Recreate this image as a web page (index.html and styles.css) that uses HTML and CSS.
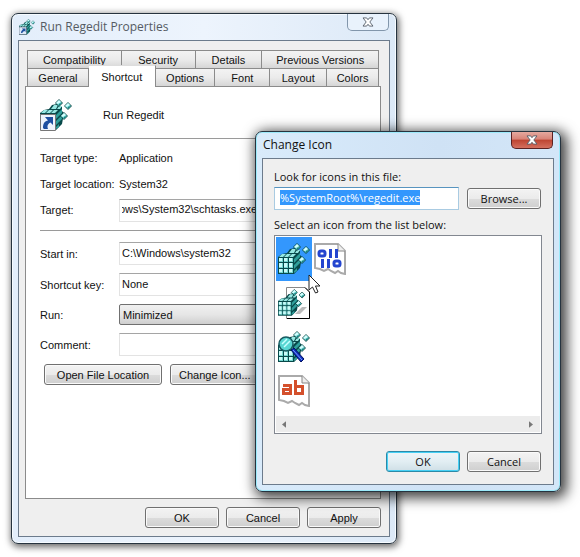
FILE: index.html
```html
<!DOCTYPE html>
<html lang="en">
<head>
    <meta charset="UTF-8">
    <meta name="viewport" content="width=device-width, initial-scale=1.0">
    <title>Run Regedit Properties</title>
    <link rel="stylesheet" href="styles.css">
</head>
<body>

    <!-- Shared icon shapes -->
    <svg class="defs" aria-hidden="true">
        <defs>
            <g id="gem" stroke="#00302f" stroke-width="0.8">
                <path d="M-3.500 0L0 -3.500L3.500 0L0 3.500Z" fill="#5cc9c4"/>
                <path d="M-3 0L0 -3L2 -1L-1 1Z" fill="#d4ffff" stroke="none"/>
                <path d="M0 3L0 1L3 0Z" fill="#1c7f7f" stroke="none"/>
            </g>
            <g id="block">
                <path d="M0 14L4 11L9 10L12 6L17 5L22 8V12L24 14L22 25L16 31L0 31Z" fill="#08494a"/>
                <path d="M1 15h4v4h-4zM6 15h4v4h-4zM11 15h4v4h-4zM1 20h4v5h-4zM6 20h4v5h-4zM11 20h4v5h-4zM1 26h4v4h-4zM6 26h4v4h-4zM11 26h4v4h-4z" fill="#74d6d0"/>
                <path d="M1 15h3v3h-3zM6 15h3v3h-3zM11 15h3v3h-3zM1 20h3v4h-3zM6 20h3v4h-3zM11 20h3v4h-3zM1 26h3v3h-3zM6 26h3v3h-3zM11 26h3v3h-3z" fill="#c9fbf8"/>
                <path d="M1 14l3-3h4l-3 3zM6 14l3-3h4l-3 3zM11 14l3-3h4l-3 3zM11 10l3-4h4l-2 4zM17 10l2-3h3l-2 3z" fill="#97e8e2"/>
                <path d="M16 16l3-3v4l-3 3zM19 13l3-3v4l-3 3zM16 22l3-3v4l-3 3zM19 19l3-3v4l-3 3zM16 28l3-3v3l-3 2z" fill="#2f9f9b"/>
            </g>
            <g id="regedit">
                <use href="#block"/>
                <use href="#gem" x="24" y="17"/>
                <use href="#gem" x="19" y="4"/>
                <use href="#gem" x="28" y="7"/>
            </g>
            <g id="sheet">
                <path d="M1 1H24L31 8V31L27 30L24 28L21 30L17 28L14 26L10 28L6 26L1 25Z" fill="#fff" stroke="#aaa" stroke-width="2"/>
                <path d="M24 1V8H31" fill="#eee" stroke="#888" stroke-width="1"/>
            </g>
            <g id="cross">
                <path d="M1 1H5L6.500 3L8 1H12L8.500 5.500L12 10H8L6.500 8L5 10H1L4.500 5.500Z"/>
            </g>
        </defs>
    </svg>

    <main class="desktop">

        <!-- Properties window -->
        <section class="window properties" aria-label="Run Regedit Properties">
            <header class="title-bar">
                <svg class="title-icon" viewBox="0 0 32 32" aria-hidden="true">
                    <use href="#regedit"/>
                    <path d="M0 16H15V31H0Z" fill="#dfe9f7" stroke="#345"/>
                    <path d="M4 28C4 23 7 22 8 22L6 19H13V26L11 24C8 25 7 26 7 28Z" fill="#1d4fa0"/>
                </svg>
                <h1>Run Regedit Properties</h1>
                <button class="close" type="button" aria-label="Close">
                    <svg viewBox="0 0 13 11" aria-hidden="true"><use href="#cross"/></svg>
                </button>
            </header>
            <div class="client">
                <div class="tabs tabs-back">
                    <button type="button">Compatibility</button>
                    <button type="button">Security</button>
                    <button type="button">Details</button>
                    <button type="button">Previous Versions</button>
                </div>
                <div class="tabs tabs-front">
                    <button type="button">General</button>
                    <button type="button" class="active">Shortcut</button>
                    <button type="button">Options</button>
                    <button type="button">Font</button>
                    <button type="button">Layout</button>
                    <button type="button">Colors</button>
                </div>
                <div class="panel">
                    <div class="shortcut-name">
                        <svg viewBox="0 0 32 32" aria-hidden="true">
                            <use href="#regedit"/>
                            <path d="M0.500 15.500H15.500V31.500H0.500Z" fill="#eef4fc" stroke="#777"/>
                            <path d="M3 29C3 24 5 22 8 21.500L5 18H13V26L10.500 23.500C7.500 25 7 27 8 30H4Z" fill="#1d4fa0"/>
                        </svg>
                        <span>Run Regedit</span>
                    </div>
                    <hr>
                    <dl class="field info">
                        <dt>Target type:</dt>
                        <dd>Application</dd>
                    </dl>
                    <dl class="field info">
                        <dt>Target location:</dt>
                        <dd>System32</dd>
                    </dl>
                    <div class="field info">
                        <label for="target">Target:</label>
                        <input class="scrolled" id="target" type="text" value="ows\System32\schtasks.exe">
                    </div>
                    <hr>
                    <div class="fields">
                        <div class="field">
                            <label for="start-in">Start in:</label>
                            <input id="start-in" type="text" value="C:\Windows\system32">
                        </div>
                        <div class="field">
                            <label for="shortcut-key">Shortcut key:</label>
                            <input id="shortcut-key" type="text" value="None">
                        </div>
                        <div class="field">
                            <label for="run">Run:</label>
                            <select id="run">
                                <option>Minimized</option>
                            </select>
                        </div>
                        <div class="field">
                            <label for="comment">Comment:</label>
                            <input id="comment" type="text">
                        </div>
                    </div>
                    <div class="panel-buttons">
                        <button class="btn wide" type="button">Open File Location</button>
                        <button class="btn" type="button">Change Icon...</button>
                    </div>
                </div>
                <footer class="actions">
                    <button class="btn" type="button">OK</button>
                    <button class="btn" type="button">Cancel</button>
                    <button class="btn" type="button">Apply</button>
                </footer>
            </div>
        </section>

        <!-- Change Icon dialog -->
        <section class="window change-icon" aria-label="Change Icon">
            <header class="title-bar">
                <h2>Change Icon</h2>
                <button class="close" type="button" aria-label="Close">
                    <svg viewBox="0 0 13 11" aria-hidden="true"><use href="#cross"/></svg>
                </button>
            </header>
            <div class="client">
                <label for="icon-file">Look for icons in this file:</label>
                <div class="browse">
                    <input id="icon-file" type="text" value="%SystemRoot%\regedit.exe" spellcheck="false">
                    <button class="btn" type="button">Browse...</button>
                </div>
                <p>Select an icon from the list below:</p>
                <div class="icon-list">
                    <ul>
                        <li class="selected">
                            <svg viewBox="0 0 32 32"><use href="#regedit"/></svg>
                        </li>
                        <li>
                            <svg viewBox="0 0 32 32">
                                <path d="M8.500 0.500H27L31.500 5V31.500H8.500Z" fill="#fff" stroke="#888"/>
                                <path d="M27 0.500L31.500 5V31.500H9" fill="none" stroke="#000"/>
                                <path d="M17 27L24 20L29 20L22 27Z" fill="#bbb"/>
                                <g transform="translate(0 2) scale(0.86)"><use href="#regedit"/></g>
                            </svg>
                        </li>
                        <li>
                            <svg viewBox="0 0 32 32">
                                <use href="#regedit"/>
                                <circle cx="8" cy="13" r="7" fill="#58d6d2" stroke="#175a60" stroke-width="1.500"/>
                                <path d="M4 13L9 8M6 16L12 10" stroke="#c8ffff" stroke-width="1.500"/>
                                <path d="M13 19L16 17L26 28L23 31Z" fill="#1030c0" stroke="#001060"/>
                                <path d="M15 19L24 29" stroke="#7aa0ff"/>
                            </svg>
                        </li>
                        <li>
                            <svg viewBox="0 0 32 32">
                                <use href="#sheet"/>
                                <g fill="none" stroke="#d4502c" stroke-width="3">
                                    <path d="M5 10.500H12.500V20M12.500 14.500H5.500V18.500H12.500"/>
                                    <path d="M17.500 5V18.500H24.500V11.500H17.500"/>
                                </g>
                            </svg>
                        </li>
                        <li>
                            <svg viewBox="0 0 32 32">
                                <use href="#sheet"/>
                                <g fill="none" stroke="#2445cf" stroke-width="3">
                                    <rect x="5" y="8" width="6" height="5" rx="2"/>
                                    <path d="M16.500 6V15M22.500 6V15"/>
                                    <path d="M8.500 16V25M14.500 16V25"/>
                                    <rect x="20" y="18" width="6" height="5" rx="2"/>
                                </g>
                            </svg>
                        </li>
                    </ul>
                    <div class="scroll-bar">
                        <button type="button" aria-label="Scroll left"><svg viewBox="0 0 5 8"><path d="M5 0V8L0 4Z"/></svg></button>
                        <button type="button" aria-label="Scroll right"><svg viewBox="0 0 5 8"><path d="M0 0V8L5 4Z"/></svg></button>
                    </div>
                </div>
                <footer class="actions">
                    <button class="btn default" type="button">OK</button>
                    <button class="btn" type="button">Cancel</button>
                </footer>
            </div>
        </section>

        <svg class="cursor" viewBox="0 0 13 20" aria-hidden="true">
            <path d="M1 1V16L4.500 13L7.500 19L10 18L7.500 12H12Z" fill="#fff" stroke="#222"/>
        </svg>
    </main>

    <script>
        // The file name is preselected when the dialog opens
        const iconFile = document.getElementById("icon-file");
        iconFile.focus();
        iconFile.select();
    </script>

</body>
</html>
```
FILE: styles.css
```css
/* Reset default styles */
* {
    box-sizing: border-box;
}

body, h1, h2, p, ul, dl, dd {
    margin: 0;
    padding: 0;
}

body {
    background: #fff;
    color: #111;
    font-family: "Liberation Sans", Arial, sans-serif;
    font-size: 11px;
    line-height: 14px;
}

button, input, select {
    font: inherit;
    color: inherit;
}

svg {
    display: block;
}

.defs {
    position: absolute;
    width: 0;
    height: 0;
}

.desktop {
    position: relative;
    min-height: 100vh;
}

/* Windows */
.window {
    position: absolute;
    padding: 0 6px 6px;
    border: 1px solid #26333f;
    border-radius: 7px;
}

.properties {
    left: 11px;
    top: 13px;
    width: 386px;
    background: linear-gradient(90deg, #e3eefb, #edf4fd 50%, #dce9f7);
    box-shadow: inset 0 0 0 1px #f6fbff, 1px 2px 7px 1px rgba(0, 0, 0, 0.6);
}

.change-icon {
    left: 255px;
    top: 131px;
    width: 306px;
    background: linear-gradient(90deg, #d9ebfb, #cfe2f5 60%, #d3e6f8);
    box-shadow: inset 0 0 0 1px #9ceafa, 3px 3px 13px 3px rgba(0, 0, 0, 0.75);
    font-family: "Open Sans", "Noto Sans", sans-serif;
}

.title-bar {
    display: flex;
    align-items: center;
    height: 26px;
    padding: 0 1px;
}

.title-bar h1, .title-bar h2 {
    flex: 1;
    font-family: "Open Sans", "Noto Sans", sans-serif;
    font-size: 12px;
    font-weight: 400;
}

.title-bar h1 {
    color: #555b63;
}

.title-icon {
    width: 16px;
    height: 16px;
    margin-right: 5px;
}

.close {
    display: flex;
    align-items: center;
    justify-content: center;
    align-self: flex-start;
    width: 42px;
    height: 17px;
    padding: 0;
    border: 1px solid #8296ab;
    border-top: 0;
    border-radius: 0 0 5px 5px;
    background: #e9f2fc;
}

.close svg {
    width: 12px;
    height: 10px;
    overflow: visible;
    fill: #fff;
    stroke: #565e69;
}

.change-icon .close {
    border-color: #5b2222;
    background: linear-gradient(#e5a99f, #d88377 45%, #bd4431 50%, #d4705f);
}

.client {
    border: 1px solid #6c7b8c;
    background: #efefef;
}

.properties .client {
    padding: 9px 8px 8px 6px;
}

.change-icon .client {
    padding: 11px 11px 12px;
}

/* Tabs */
.tabs {
    display: grid;
    margin: 0 2px;
    border-left: 1px solid #8b8b8b;
}

.tabs-back {
    grid-template-columns: 94fr 74fr 67fr 117fr;
}

.tabs-front {
    grid-template-columns: 61fr 67fr 60fr 55fr 57fr 52fr;
}

.tabs button {
    height: 18px;
    padding: 0;
    border: 1px solid #8b8b8b;
    border-width: 1px 1px 0 0;
    background: linear-gradient(#f3f3f3, #ebebeb 50%, #d6d6d6);
}

.tabs .active {
    position: relative;
    height: 22px;
    margin: -3px 0 -1px;
    border-top-color: #ddd;
    background: #fff;
}

.panel {
    min-height: 413px;
    padding: 12px 9px 0 14px;
    border: 1px solid #8b8b8b;
    background: #fff;
}

.panel hr {
    height: 1px;
    margin: 7px 0 6px;
    border: 0;
    background: #9a9a9a;
}

.shortcut-name {
    display: flex;
    align-items: center;
    gap: 31px;
}

.shortcut-name svg {
    width: 32px;
    height: 32px;
}

.field {
    display: grid;
    grid-template-columns: 79px 1fr;
    align-items: center;
}

.info {
    min-height: 26px;
}

.field input {
    width: 100%;
    height: 23px;
    padding: 0 2px 2px;
    border: 1px solid #e3e3e3;
    border-top-color: #a5a5a5;
    background: #fff;
    outline: none;
}

.field .scrolled {
    text-indent: -3px;
}

.field select {
    width: 100%;
    height: 21px;
    padding: 0 3px;
    appearance: none;
    border: 1px solid #707070;
    border-radius: 2px;
    background: linear-gradient(#f0f0f0, #e6e6e6 50%, #cfcfcf);
}

.fields {
    display: grid;
    gap: 8px;
    padding-top: 5px;
}

.panel-buttons {
    display: flex;
    gap: 8px;
    margin: 8px 4px 0;
}

/* Buttons */
.btn {
    min-width: 74px;
    height: 21px;
    padding: 0 8px;
    border: 1px solid #707070;
    border-radius: 3px;
    background: linear-gradient(#f3f3f3, #ebebeb 50%, #dcdcdc 51%, #cfcfcf);
    box-shadow: inset 0 0 0 1px #fafafa;
    white-space: nowrap;
}

.wide {
    min-width: 118px;
}

.default {
    border-color: #2c8aa8;
    box-shadow: inset 0 0 0 1px #46d0f5;
    background: linear-gradient(#eef5f8, #e2eef3 50%, #cfdfe6);
}

.actions {
    display: flex;
    justify-content: flex-end;
    gap: 7px;
    padding-top: 8px;
}

/* Change Icon dialog */
.change-icon label {
    display: block;
}

.browse {
    display: flex;
    align-items: center;
    gap: 8px;
    margin: 3px 1px 8px 0;
}

.browse input {
    flex: 1;
    min-width: 0;
    height: 23px;
    padding: 0 5px 3px;
    border: 1px solid #a9cbe2;
    border-top-color: #5794bf;
    background: #fff;
    outline: none;
}

.browse input::selection {
    background: #3397fd;
    color: #fff;
}

.icon-list {
    margin-top: 3px;
    padding: 1px;
    border: 1px solid #828790;
    background: #fff;
}

.icon-list ul {
    display: grid;
    grid-auto-flow: column;
    grid-template-rows: repeat(4, 44px);
    grid-auto-columns: 36px;
    height: 179px;
    list-style: none;
}

.icon-list li {
    display: flex;
    align-items: center;
    justify-content: center;
}

.icon-list li svg {
    width: 32px;
    height: 32px;
}

.icon-list .selected {
    background: #3397fd;
}

.scroll-bar {
    display: flex;
    justify-content: space-between;
    height: 16px;
    background: #ececec;
}

.scroll-bar button {
    width: 17px;
    padding: 0 6px;
    border: 0;
    background: none;
}

.scroll-bar svg {
    width: 4px;
    height: 7px;
    fill: #777;
}

.change-icon .actions {
    padding: 17px 1px 0 0;
}

.cursor {
    position: absolute;
    left: 308px;
    top: 274px;
    width: 13px;
    height: 20px;
}
```
